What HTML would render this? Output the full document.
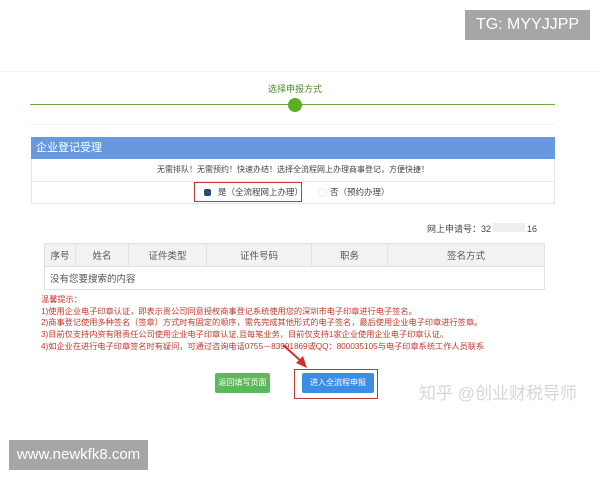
<!DOCTYPE html>
<html><head><meta charset="utf-8"><style>
*{margin:0;padding:0;box-sizing:border-box}
body{width:600px;height:480px;background:#fff;position:relative;overflow:hidden;font-family:"Liberation Sans","Noto Sans CJK SC",sans-serif;color:#333}
.a{position:absolute}
.tb td{border:1px solid #e2e2e2;font-size:9.5px;color:#555;text-align:center;height:23px}
.w{font-size:8.2px;color:#c0392b;line-height:11.7px;white-space:nowrap}
</style></head><body>
<div class="a" style="left:465px;top:10px;width:125px;height:30px;background:#a6a6a6;color:#fff;font-size:16px;line-height:30px;text-align:center">TG: MYYJJPP</div>
<div class="a" style="left:0;top:71px;width:600px;height:1px;background:#f3f3f3"></div>
<div class="a" style="left:268px;top:82px;font-size:9px;color:#4a8a2a">选择申报方式</div>
<div class="a" style="left:30px;top:104px;width:525px;height:1px;background:#6aaa3a"></div>
<div class="a" style="left:288px;top:98px;width:14px;height:14px;border-radius:50%;background:#5cb020"></div>
<div class="a" style="left:30px;top:124px;width:525px;height:1px;background:#f3f3f3"></div>
<div class="a" style="left:31px;top:137px;width:524px;height:22px;background:#6898e0;color:#fff;font-size:11px;line-height:22px;padding-left:5px">企业登记受理</div>
<div class="a" style="left:31px;top:159px;width:524px;height:45px;border:1px solid #e6e6e6;border-top:none"></div>
<div class="a" style="left:31px;top:181px;width:524px;height:1px;background:#e6e6e6"></div>
<div class="a" style="left:31px;top:164px;width:524px;text-align:center;font-size:8px;color:#444">无需排队！无需预约！快速办结！选择全流程网上办理商事登记，方便快捷！</div>
<div class="a" style="left:194px;top:182px;width:108px;height:20px;border:1.5px solid #c0393b"></div>
<div class="a" style="left:204px;top:189px;width:7px;height:7px;border-radius:2px;background:#2a4a7a"></div>
<div class="a" style="left:218px;top:186px;font-size:8.5px;color:#444">是（全流程网上办理）</div>
<div class="a" style="left:318px;top:188px;width:9px;height:9px;border-radius:50%;border:1px solid #eee"></div>
<div class="a" style="left:330px;top:186px;font-size:8.5px;color:#444">否（预约办理）</div>
<div class="a" style="left:427px;top:222px;font-size:9px;color:#444">网上申请号：32<span style="display:inline-block;width:32px;background:#eee;height:9px;margin:0 2px"></span>16</div>
<table class="a tb" style="left:44px;top:243px;width:501px;border-collapse:collapse">
<tr style="background:#f2f2f2"><td style="width:31px">序号</td><td style="width:53px">姓名</td><td style="width:78px">证件类型</td><td style="width:105px">证件号码</td><td style="width:76px">职务</td><td>签名方式</td></tr>
<tr><td colspan="6" style="text-align:left;padding-left:5px">没有您要搜索的内容</td></tr></table>
<div class="a w" style="left:41px;top:294px">温馨提示：<br>1)使用企业电子印章认证，即表示贵公司同意授权商事登记系统使用您的深圳市电子印章进行电子签名。<br>2)商事登记使用多种签名（签章）方式时有固定的顺序，需先完成其他形式的电子签名，最后使用企业电子印章进行签章。<br>3)目前仅支持内资有限责任公司使用企业电子印章认证,且每笔业务，目前仅支持1家企业使用企业电子印章认证。<br>4)如企业在进行电子印章签名时有疑问，可通过咨询电话0755－83991869或QQ：800035105与电子印章系统工作人员联系</div>
<svg class="a" style="left:280px;top:342px" width="32" height="30"><line x1="3" y1="3" x2="22" y2="20" stroke="#d03030" stroke-width="2"/><polygon points="27,26 16,21 23,14" fill="#d03030"/></svg>
<div class="a" style="left:215px;top:373px;width:55px;height:20px;background:#5cb85c;border-radius:2px;color:#fff;font-size:8px;line-height:20px;text-align:center">返回填写页面</div>
<div class="a" style="left:294px;top:369px;width:84px;height:30px;border:1.5px solid #c0393b"></div>
<div class="a" style="left:302px;top:373px;width:72px;height:20px;background:#3a8ee6;border-radius:2px;color:#fff;font-size:8px;line-height:20px;text-align:center">进入全流程申报</div>
<div class="a" style="left:419px;top:379px;font-size:17px;color:#d6d6d6;white-space:nowrap">知乎 @创业财税导师</div>
<div class="a" style="left:9px;top:440px;width:139px;height:30px;background:#a6a6a6;color:#fff;font-size:15px;line-height:30px;text-align:center">www.newkfk8.com</div>
</body></html>
